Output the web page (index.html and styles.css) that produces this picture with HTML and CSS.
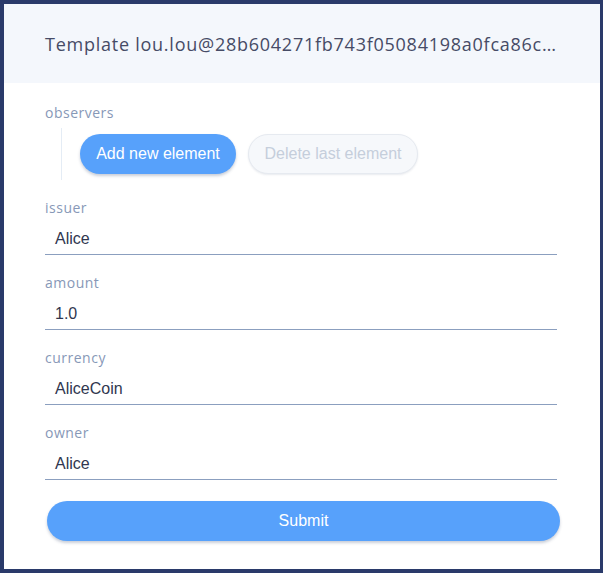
FILE: index.html
```html
<!DOCTYPE html>
<html>
<head>
<meta charset="utf-8">
<link rel="stylesheet" href="styles.css">
</head>
<body>
<div class="card">
  <div class="header">
    <div class="title">Template lou.lou@28b604271fb743f05084198a0fca86c…</div>
  </div>
  <div class="form">
    <div class="label">observers</div>
    <div class="list">
      <button class="btn btn-primary">Add new element</button>
      <button class="btn btn-disabled">Delete last element</button>
    </div>
    <div class="field">
      <div class="label">issuer</div>
      <div class="value">Alice</div>
    </div>
    <div class="field">
      <div class="label">amount</div>
      <div class="value">1.0</div>
    </div>
    <div class="field">
      <div class="label">currency</div>
      <div class="value">AliceCoin</div>
    </div>
    <div class="field">
      <div class="label">owner</div>
      <div class="value">Alice</div>
    </div>
    <button class="btn btn-primary submit">Submit</button>
  </div>
</div>
</body>
</html>
```

FILE: styles.css
```css
html, body {
  margin: 0;
  padding: 0;
  background: #2a3a6a;
  height: 573px;
  overflow: hidden;
}
body {
  display: flex;
  padding: 4px 3px 4px 4px;
  box-sizing: border-box;
}
.card {
  flex: 1;
  min-width: 0;
  overflow: hidden;
  background: #ffffff;
  display: flex;
  flex-direction: column;
}
.header {
  height: 79px;
  background: #f4f7fc;
  display: flex;
  align-items: center;
  padding: 0 40px 0 41px;
}
.title {
  font-family: "Open Sans", "Lato", sans-serif;
  font-size: 18px;
  letter-spacing: 0.75px;
  color: #464b66;
  white-space: nowrap;
  min-width: 0;
  flex: 1;
}
.form {
  padding: 21px 43px 0 41px;
  display: flex;
  flex-direction: column;
}
.label {
  font-family: "Open Sans", "Lato", sans-serif;
  font-size: 14px;
  letter-spacing: 0.5px;
  line-height: 17px;
  color: #8798b7;
}
.list {
  margin: 7px 0 0 16px;
  padding: 6px 0 6px 18px;
  border-left: 1px solid #e4ecf5;
  display: flex;
  gap: 12px;
}
.btn {
  font-family: "Liberation Sans", Arial, sans-serif;
  font-size: 16px;
  height: 40px;
  border-radius: 20px;
  padding: 0;
  border: none;
  cursor: pointer;
}
.btn-primary {
  background: #57a1fb;
  color: #ffffff;
  box-shadow: 0 2px 3px rgba(40, 60, 100, 0.25);
}
.btn-disabled {
  background: #f6f8fb;
  color: #c5cedb;
  border: 1px solid #e6eaf0;
  box-shadow: 0 1px 2px rgba(40, 60, 100, 0.1);
}
.list .btn-primary { width: 156px; }
.list .btn-disabled { width: 170px; }
.field {
  margin-top: 19px;
}
.field .label {
  margin-bottom: 13px;
}
.value {
  font-family: "Liberation Sans", Arial, sans-serif;
  font-size: 16px;
  line-height: 20px;
  color: #30374f;
  padding: 0 0 5px 10px;
  border-bottom: 1px solid #8b9fbf;
}
.submit {
  margin: 21px -3px 0 2px;
  height: 40px;
}
```
